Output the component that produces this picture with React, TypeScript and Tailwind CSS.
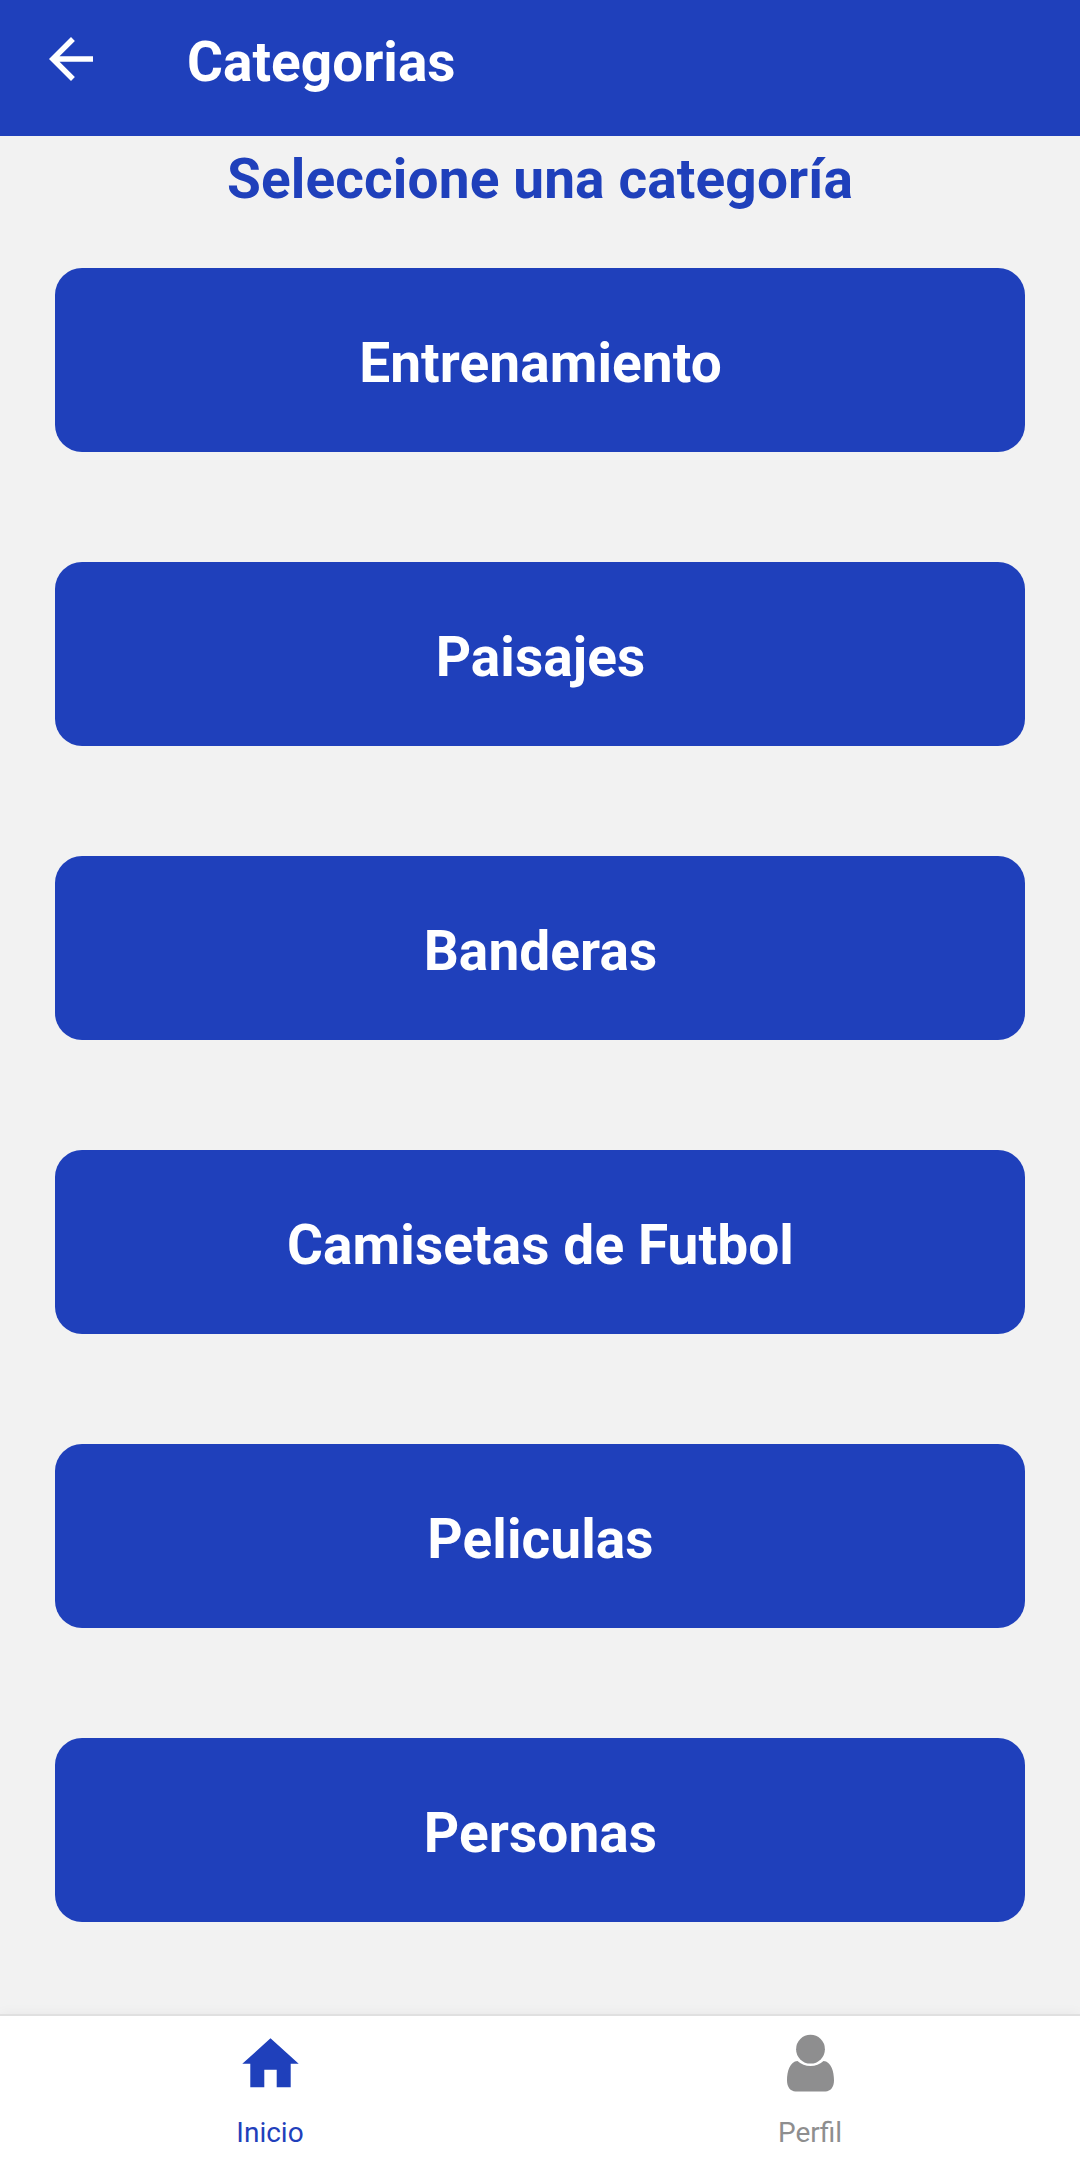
const categories = ["Entrenamiento", "Paisajes", "Banderas", "Camisetas de Futbol", "Peliculas", "Personas"];

export default function App() {
  return (
    <div className="flex h-[2160px] w-[1080px] flex-col overflow-hidden bg-[#f2f2f2] font-['Roboto',sans-serif]">
      <header className="flex h-[136px] shrink-0 items-center bg-[#1f40bb] pb-3 text-white">
        <svg className="mb-1.5 ml-[38px] size-[66px]" viewBox="0 0 24 24" fill="currentColor">
          <path d="M20 11H7.83l5.59-5.59L12 4l-8 8 8 8 1.41-1.41L7.83 13H20v-2z" />
        </svg>
        <h1 className="ml-[83px] text-[55px] leading-[64px] font-bold">Categorias</h1>
      </header>
      <main className="flex flex-1 flex-col">
        <h2 className="pt-[10px] text-center text-[55px] leading-[66px] font-bold tracking-[0.12px] text-[#1f40bb]">Seleccione una categoría</h2>
        <div className="mt-[56px] flex flex-col gap-[110px] px-[55px]">
          {categories.map((name) => (
            <button key={name} className="flex h-[184px] items-center justify-center rounded-[27px] bg-[#1f40bb] pt-[7px] pl-px text-[55px] font-bold tracking-[0.08px] text-white">
              {name}
            </button>
          ))}
        </div>
      </main>
      <nav className="grid h-[146px] shrink-0 grid-cols-2 border-t-2 border-[#e0e0e0] bg-white text-[28px] leading-8 shadow-[0_0_12px_rgba(0,0,0,0.05)]">
        <a className="flex flex-col items-center text-[#1f40bb]">
          <svg className="mt-[14px] size-[68px]" viewBox="0 0 68 68" fill="currentColor">
            <path d="M34.5 8.3L62.7 33.8H54.7V57.2H40.7V39.7H28.3V57.2H14.3V33.8H6.3Z" />
          </svg>
          <span className="mt-[19px]">Inicio</span>
        </a>
        <a className="flex flex-col items-center text-[#8e8e8f]">
          <svg className="mt-[14px] size-[68px]" viewBox="0 0 68 68" fill="currentColor">
            <circle cx="34.5" cy="19.2" r="14.4" />
            <path d="M21.5 31C14 31.5 11 41 11 50.5C11 57 14.5 61.4 19.5 61.4H49.5C54.5 61.4 58 57 58 50.5C58 41 55 31.5 47.5 31Q42 36 34.5 36T21.5 31Z" />
          </svg>
          <span className="mt-[19px]">Perfil</span>
        </a>
      </nav>
    </div>
  );
}
